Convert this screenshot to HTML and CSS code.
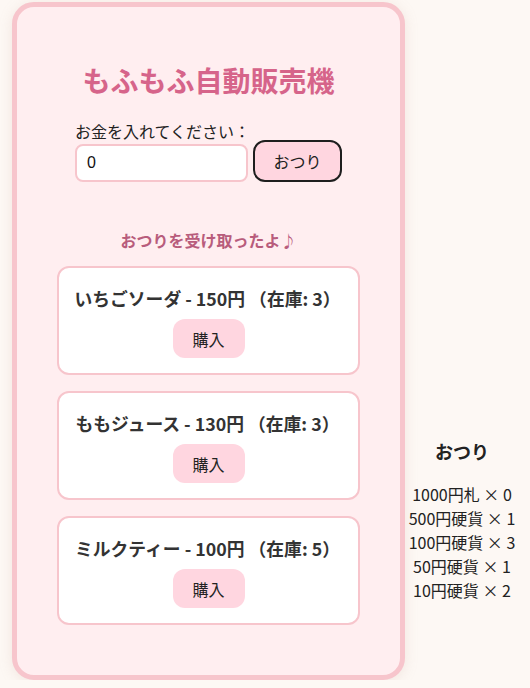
FILE: index.html
```html
<!DOCTYPE html>
<html lang="ja">
<head>
  <meta charset="UTF-8" />
  <title>もふもふ自動販売機</title>
  <link rel="stylesheet" href="styles.css">
</head>
<body>
  <div class="machine">
    <h1>もふもふ自動販売機</h1>

    <div class="money-box">
      <label for="moneyInput">お金を入れてください：</label>
      <div class="money-row">
        <input type="number" id="moneyInput" value="0" />
        <button class="change-button">おつり</button>
      </div>
    </div>

    <p class="message">おつりを受け取ったよ♪</p>

    <div class="item-list">
      <div class="item-card">
        <h3>いちごソーダ - 150円 （在庫: 3）</h3>
        <button class="buy-button">購入</button>
      </div>
      <div class="item-card">
        <h3>ももジュース - 130円 （在庫: 3）</h3>
        <button class="buy-button">購入</button>
      </div>
      <div class="item-card">
        <h3>ミルクティー - 100円 （在庫: 5）</h3>
        <button class="buy-button">購入</button>
      </div>
    </div>
  </div>

  <div class="change-panel">
    <h3>おつり</h3>
    <ul class="change-list">
      <li>1000円札 × 0</li>
      <li>500円硬貨 × 1</li>
      <li>100円硬貨 × 3</li>
      <li>50円硬貨 × 1</li>
      <li>10円硬貨 × 2</li>
    </ul>
  </div>
</body>
</html>
```

FILE: styles.css
```css
body {
  margin: 0;
  padding: 2px 0 0 12px;
  display: flex;
  align-items: flex-start;
  background-color: #fdf8f4;
  font-family: "Noto Sans CJK JP", "Noto Sans", sans-serif;
  color: #222;
}

.machine {
  width: 393px;
  box-sizing: border-box;
  padding: 53px 40px 50px;
  background-color: #ffeef0;
  border: 5px solid #f7c5cc;
  border-radius: 22px;
  box-shadow: 0 2px 14px rgba(190, 150, 140, 0.18);
}

h1 {
  margin: 0;
  text-align: center;
  font-size: 28px;
  line-height: 40px;
  color: #d6648a;
}

.money-box {
  width: fit-content;
  margin: 22px auto 0;
}

.money-box label {
  display: block;
  font-size: 16px;
  line-height: 18px;
}

.money-row {
  display: flex;
  align-items: flex-end;
  gap: 5px;
}

.money-row input {
  width: 173px;
  height: 38px;
  box-sizing: border-box;
  padding: 0 10px;
  border: 2px solid #f7c5cc;
  border-radius: 8px;
  font-family: "Liberation Sans", sans-serif;
  font-size: 16px;
  color: #111;
  background: #fff;
  outline: none;
}

.money-row input::-webkit-inner-spin-button {
  display: none;
}

.change-button {
  width: 89px;
  height: 42px;
  border: 2px solid #1e1e1e;
  border-radius: 12px;
  background-color: #ffd6e0;
  font-family: inherit;
  font-size: 16px;
  color: #222;
}

.message {
  margin: 46px 0 14px;
  text-align: center;
  font-size: 16px;
  line-height: 24px;
  font-weight: bold;
  color: #b85c7c;
}

.item-list {
  display: flex;
  flex-direction: column;
  gap: 16px;
}

.item-card {
  display: flex;
  flex-direction: column;
  align-items: center;
  height: 109px;
  box-sizing: border-box;
  padding-top: 18px;
  background: #fff;
  border: 2px solid #f7c5cc;
  border-radius: 12px;
}

.item-card h3 {
  margin: 0 0 9px;
  padding-right: 2px;
  font-size: 17.8px;
  line-height: 24px;
  color: #333;
}

.buy-button {
  width: 72px;
  height: 39px;
  border: none;
  border-radius: 12px;
  background-color: #ffd6e0;
  font-family: inherit;
  font-size: 16px;
  color: #222;
}

.change-panel {
  align-self: flex-end;
  width: 114px;
  margin-bottom: 78px;
  text-align: center;
}

.change-panel h3 {
  margin: 0 0 18px;
  font-size: 18px;
  line-height: 26px;
}

.change-list {
  list-style: none;
  margin: 0;
  padding: 0;
  font-size: 16px;
  line-height: 24px;
}
```
